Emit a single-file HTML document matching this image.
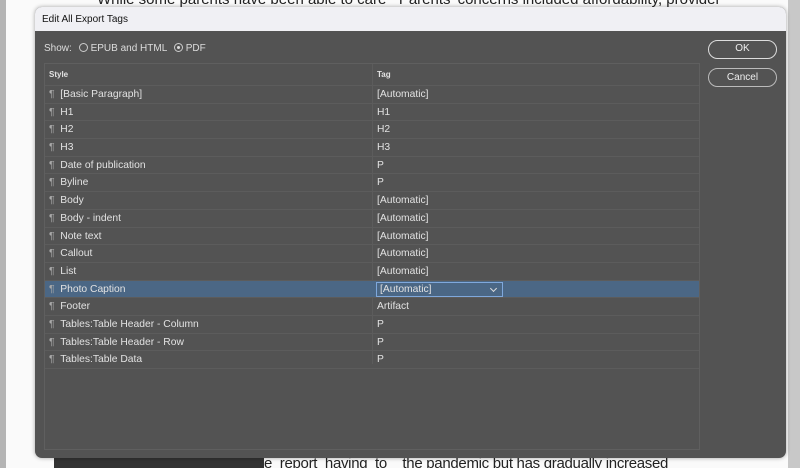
<!DOCTYPE html>
<html><head><meta charset="utf-8"><style>
*{margin:0;padding:0;box-sizing:border-box}
html,body{width:800px;height:468px;overflow:hidden}
body{background:#fafafa;font-family:"Liberation Sans","DejaVu Sans",sans-serif;position:relative}
.lf{position:absolute;left:0;top:0;width:6px;height:468px;background:#b4b4b4}
.rf{position:absolute;left:788px;top:0;width:12px;height:468px;background:#c8c8c8}
.bgt{position:absolute;font-size:15px;color:#222;white-space:nowrap}
.dlg{position:absolute;left:35px;top:7px;width:751px;height:451px;border-radius:7px;background:#535353;overflow:hidden;box-shadow:0 0 4px rgba(0,0,0,.35)}
.tb{height:24px;background:#f0f0f4;font-size:10px;color:#111;padding:7px 0 0 7px}
.show{position:absolute;left:9px;top:36px;font-size:10px;color:#ddd}
.rad{display:inline-block;width:9px;height:9px;border:1px solid #ccc;border-radius:50%;vertical-align:-1px;margin:0 3px 0 4px;position:relative}
.rad.on::after{content:"";position:absolute;left:2px;top:2px;width:3px;height:3px;border-radius:50%;background:#ddd}
.tbl{position:absolute;left:9px;top:56px;width:656px;height:387px;border:1px solid #5f5f5f}
.row{position:relative;height:17.7px;border-bottom:1px solid #5c5c5c;font-size:10.3px;color:#e2e2e2;line-height:17px}
.row .a{position:absolute;left:4px}
.row .a i{font-style:normal;color:#aaa}
.row .b{position:absolute;left:332px}
.hd{height:22px;font-weight:bold;font-size:8px;line-height:21px}
.sel{background:#4b6785}
.vl{position:absolute;left:327px;top:0;width:1px;height:300px;background:#5c5c5c}
.dd{position:absolute;left:331px;top:1px;width:127px;height:15px;border:1px solid #7fa8dc;line-height:13px;padding-left:3px}
.dd::after{content:"";position:absolute;right:6px;top:3px;width:4px;height:4px;border-right:1px solid #ddd;border-bottom:1px solid #ddd;transform:rotate(45deg)}
.btn{position:absolute;left:673px;width:69px;height:19px;border:1.5px solid #ddd;border-radius:10px;color:#eee;font-size:10px;text-align:center;line-height:16px}
.btn2{border-color:#bbb;border-width:1px;line-height:17px}
</style></head><body>
<div class="lf"></div><div class="rf"></div>
<div class="bgt" style="left:97px;top:-9px">While some parents have been able to care &nbsp; Parents' concerns included affordability, provider</div>
<div style="position:absolute;left:54px;top:457px;width:210px;height:11px;background:#333"></div>
<div class="bgt" style="left:264px;top:455px;letter-spacing:-0.3px">e &nbsp;report &nbsp;having &nbsp;to &nbsp; &nbsp;the pandemic but has gradually increased</div>
<div class="dlg">
<div class="tb">Edit All Export Tags</div>
<div class="show">Show: <span class="rad"></span>EPUB and HTML <span class="rad on"></span>PDF</div>
<div class="btn" style="top:33px">OK</div>
<div class="btn btn2" style="top:61px">Cancel</div>
<div class="tbl">
<div class="vl"></div>
<div class="row hd"><span class="a">Style</span><span class="b">Tag</span></div>
<div class="row"><span class="a"><i>¶</i> &nbsp;[Basic Paragraph]</span><span class="b">[Automatic]</span></div>
<div class="row"><span class="a"><i>¶</i> &nbsp;H1</span><span class="b">H1</span></div>
<div class="row"><span class="a"><i>¶</i> &nbsp;H2</span><span class="b">H2</span></div>
<div class="row"><span class="a"><i>¶</i> &nbsp;H3</span><span class="b">H3</span></div>
<div class="row"><span class="a"><i>¶</i> &nbsp;Date of publication</span><span class="b">P</span></div>
<div class="row"><span class="a"><i>¶</i> &nbsp;Byline</span><span class="b">P</span></div>
<div class="row"><span class="a"><i>¶</i> &nbsp;Body</span><span class="b">[Automatic]</span></div>
<div class="row"><span class="a"><i>¶</i> &nbsp;Body - indent</span><span class="b">[Automatic]</span></div>
<div class="row"><span class="a"><i>¶</i> &nbsp;Note text</span><span class="b">[Automatic]</span></div>
<div class="row"><span class="a"><i>¶</i> &nbsp;Callout</span><span class="b">[Automatic]</span></div>
<div class="row"><span class="a"><i>¶</i> &nbsp;List</span><span class="b">[Automatic]</span></div>
<div class="row sel"><span class="a"><i>¶</i> &nbsp;Photo Caption</span><span class="dd">[Automatic]</span></div>
<div class="row"><span class="a"><i>¶</i> &nbsp;Footer</span><span class="b">Artifact</span></div>
<div class="row"><span class="a"><i>¶</i> &nbsp;Tables:Table Header - Column</span><span class="b">P</span></div>
<div class="row"><span class="a"><i>¶</i> &nbsp;Tables:Table Header - Row</span><span class="b">P</span></div>
<div class="row"><span class="a"><i>¶</i> &nbsp;Tables:Table Data</span><span class="b">P</span></div>
</div>
</div>
</body></html>
